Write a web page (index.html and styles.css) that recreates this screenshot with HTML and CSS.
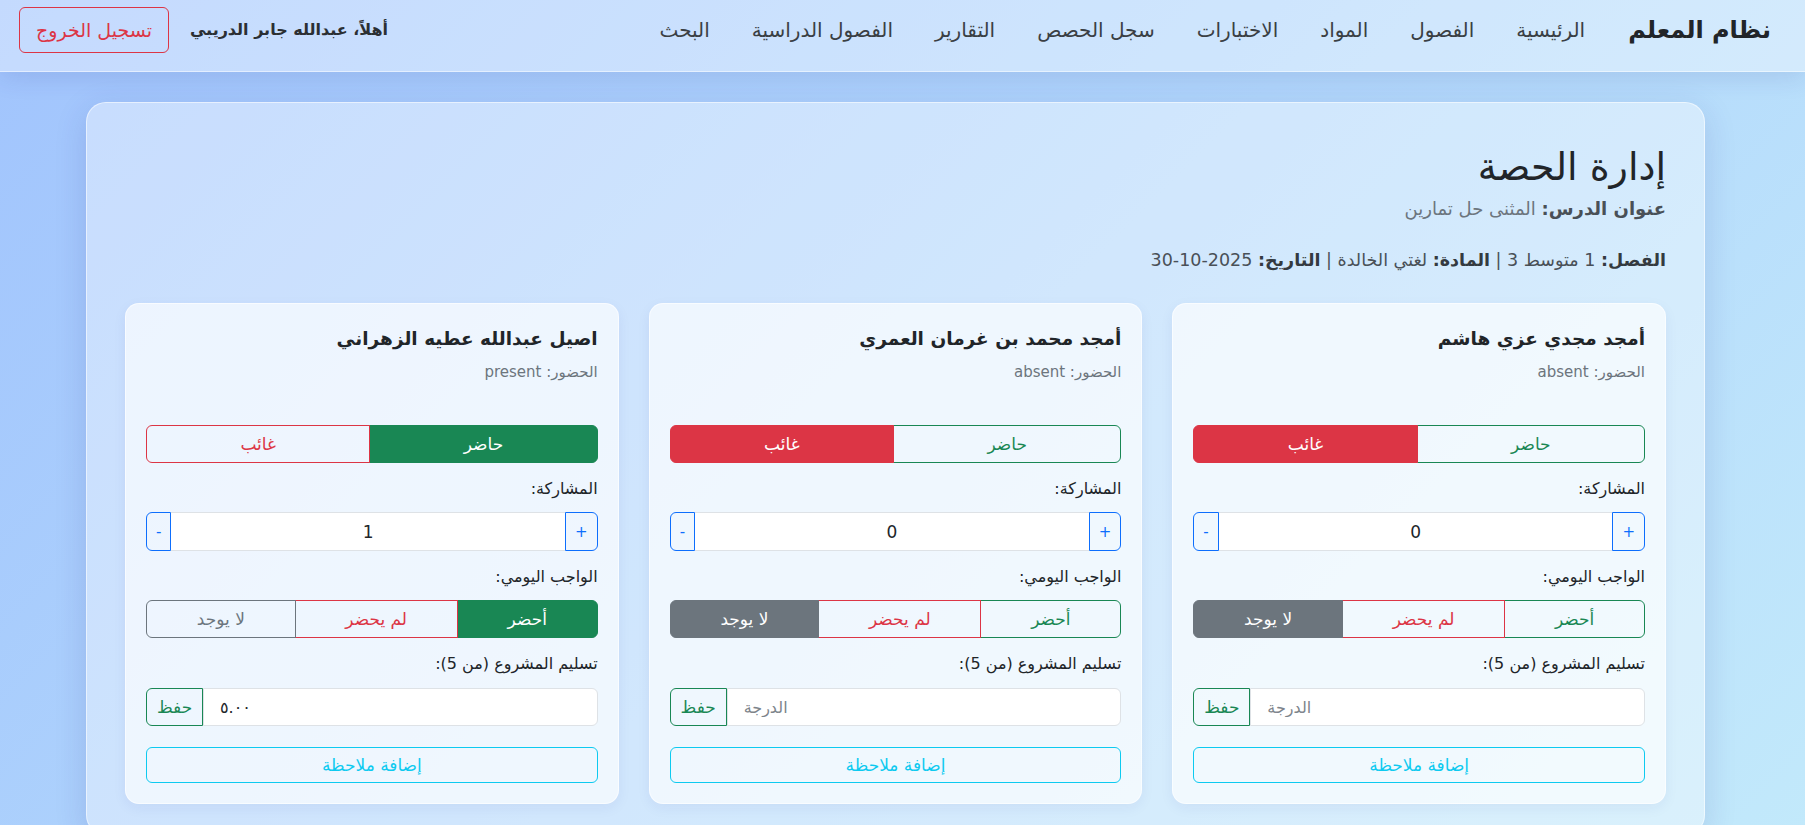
FILE: index.html
```html
<!DOCTYPE html>
<html lang="ar" dir="rtl">
<head>
<meta charset="utf-8">
<title>إدارة الحصة</title>
<link rel="stylesheet" href="styles.css">
</head>
<body>
<nav class="navbar">
  <a class="brand" href="#">نظام المعلم</a>
  <ul class="nav-links">
    <li><a href="#">الرئيسية</a></li>
    <li><a href="#">الفصول</a></li>
    <li><a href="#">المواد</a></li>
    <li><a href="#">الاختبارات</a></li>
    <li><a href="#">سجل الحصص</a></li>
    <li><a href="#">التقارير</a></li>
    <li><a href="#">الفصول الدراسية</a></li>
    <li><a href="#">البحث</a></li>
  </ul>
  <div class="user-area">
    <span class="user-name">أهلاً، عبدالله جابر الدريبي</span>
    <button class="btn-logout">تسجيل الخروج</button>
  </div>
</nav>

<main class="panel">
  <h1 class="page-title">إدارة الحصة</h1>
  <p class="lesson"><strong>عنوان الدرس:</strong> المثنى حل تمارين</p>
  <p class="details"><strong>الفصل:</strong> 1 متوسط 3 | <strong>المادة:</strong> لغتي الخالدة | <strong>التاريخ:</strong> 2025-10-30</p>

  <div class="cards">
    <section class="card">
      <h2 class="student">أمجد مجدي عزي هاشم</h2>
      <p class="attend">الحضور: absent</p>
      <div class="group">
        <button class="btn out-success">حاضر</button>
        <button class="btn fill-danger">غائب</button>
      </div>
      <label class="field-label">المشاركة:</label>
      <div class="stepper">
        <button class="step">+</button>
        <input class="step-input" type="text" value="0">
        <button class="step">-</button>
      </div>
      <label class="field-label">الواجب اليومي:</label>
      <div class="group">
        <button class="btn out-success">أحضر</button>
        <button class="btn out-danger">لم يحضر</button>
        <button class="btn fill-secondary">لا يوجد</button>
      </div>
      <label class="field-label">تسليم المشروع (من 5):</label>
      <div class="project">
        <input class="grade" type="text" placeholder="الدرجة">
        <button class="save">حفظ</button>
      </div>
      <button class="note">إضافة ملاحظة</button>
    </section>

    <section class="card">
      <h2 class="student">أمجد محمد بن غرمان العمري</h2>
      <p class="attend">الحضور: absent</p>
      <div class="group">
        <button class="btn out-success">حاضر</button>
        <button class="btn fill-danger">غائب</button>
      </div>
      <label class="field-label">المشاركة:</label>
      <div class="stepper">
        <button class="step">+</button>
        <input class="step-input" type="text" value="0">
        <button class="step">-</button>
      </div>
      <label class="field-label">الواجب اليومي:</label>
      <div class="group">
        <button class="btn out-success">أحضر</button>
        <button class="btn out-danger">لم يحضر</button>
        <button class="btn fill-secondary">لا يوجد</button>
      </div>
      <label class="field-label">تسليم المشروع (من 5):</label>
      <div class="project">
        <input class="grade" type="text" placeholder="الدرجة">
        <button class="save">حفظ</button>
      </div>
      <button class="note">إضافة ملاحظة</button>
    </section>

    <section class="card">
      <h2 class="student">اصيل عبدالله عطيه الزهراني</h2>
      <p class="attend">الحضور: present</p>
      <div class="group">
        <button class="btn fill-success">حاضر</button>
        <button class="btn out-danger">غائب</button>
      </div>
      <label class="field-label">المشاركة:</label>
      <div class="stepper">
        <button class="step">+</button>
        <input class="step-input" type="text" value="1">
        <button class="step">-</button>
      </div>
      <label class="field-label">الواجب اليومي:</label>
      <div class="group">
        <button class="btn fill-success">أحضر</button>
        <button class="btn out-danger">لم يحضر</button>
        <button class="btn out-secondary">لا يوجد</button>
      </div>
      <label class="field-label">تسليم المشروع (من 5):</label>
      <div class="project">
        <input class="grade" type="text" placeholder="الدرجة" value="٥.٠٠">
        <button class="save">حفظ</button>
      </div>
      <button class="note">إضافة ملاحظة</button>
    </section>
  </div>
</main>
</body>
</html>
```
FILE: styles.css
```css
* { box-sizing: border-box; }
html, body { margin: 0; padding: 0; }
body {
  font-family: "DejaVu Sans", "Noto Sans", sans-serif;
  font-size: 16px;
  color: #212529;
  background: linear-gradient(135deg, #a1c4fd 0%, #c2e9fb 100%);
  min-height: 100vh;
}
button, input { font-family: inherit; }

.navbar {
  height: 72px;
  display: flex;
  align-items: center;
  padding: 0 34px 12px 19px;
  background: rgba(255, 255, 255, 0.38);
  border-bottom: 1px solid rgba(255, 255, 255, 0.5);
  box-shadow: 0 6px 24px rgba(31, 38, 135, 0.12);
}
.brand {
  font-size: 24px;
  font-weight: bold;
  color: #212529;
  text-decoration: none;
  margin-left: 22px;
}
.nav-links {
  display: flex;
  list-style: none;
  margin: 0;
  padding: 0;
}
.nav-links a {
  display: block;
  padding: 0 21px;
  font-size: 20px;
  color: #3a3f44;
  text-decoration: none;
}
.user-area {
  margin-right: auto;
  display: flex;
  align-items: center;
  gap: 21px;
}
.user-name {
  font-weight: bold;
  font-size: 16px;
  color: #2b2f33;
}
.btn-logout {
  height: 46px;
  padding: 0 16px;
  font-size: 19px;
  color: #dc3545;
  background: transparent;
  border: 1px solid #dc3545;
  border-radius: 6px;
}

.panel {
  margin: 30px 100px 0 86px;
  padding: 40px 38px 30px;
  background: rgba(255, 255, 255, 0.4);
  border: 1px solid rgba(255, 255, 255, 0.55);
  border-radius: 20px;
  box-shadow: 0 8px 32px rgba(31, 38, 135, 0.15);
}
.page-title {
  margin: 0 0 4px;
  font-size: 38px;
  font-weight: normal;
  line-height: 48px;
  color: #212529;
}
.lesson {
  margin: 0 0 25px;
  font-size: 18px;
  line-height: 27px;
  color: #6c757d;
}
.lesson strong { color: #495057; }
.details {
  margin: 0 0 29px;
  font-size: 17.5px;
  line-height: 27px;
  color: #495057;
}
.details strong { color: #343a40; }

.cards {
  display: grid;
  grid-template-columns: repeat(3, 1fr);
  gap: 30px;
}
.card {
  display: flex;
  flex-direction: column;
  padding: 22px 20px 20px;
  background: rgba(255, 255, 255, 0.66);
  border: 1px solid rgba(255, 255, 255, 0.6);
  border-radius: 14px;
  box-shadow: 0 4px 14px rgba(31, 38, 135, 0.06);
}
.student {
  margin: 0 0 9px;
  font-size: 18.5px;
  line-height: 26px;
  font-weight: bold;
  color: #212529;
}
.attend {
  margin: 0 0 42px;
  font-size: 15px;
  line-height: 22px;
  color: #6c757d;
}
.group {
  display: flex;
  height: 38px;
}
.btn {
  flex: 1 1 auto;
  font-size: 17px;
  padding: 0 12px;
  background: transparent;
  border: 1px solid;
  border-radius: 0;
}
.btn + .btn { margin-right: -1px; }
.btn:first-child { border-radius: 0 6px 6px 0; }
.btn:last-child { border-radius: 6px 0 0 6px; }
.out-success { color: #198754; border-color: #198754; }
.fill-success { color: #fff; background: #198754; border-color: #198754; }
.out-danger { color: #dc3545; border-color: #dc3545; }
.fill-danger { color: #fff; background: #dc3545; border-color: #dc3545; }
.out-secondary { color: #6c757d; border-color: #6c757d; }
.fill-secondary { color: #fff; background: #6c757d; border-color: #6c757d; }

.field-label {
  display: block;
  margin: 15px 0 12px;
  font-size: 16px;
  line-height: 22px;
  color: #212529;
}
.stepper {
  display: flex;
  height: 39px;
}
.step {
  padding: 0 9px;
  font-size: 15px;
  color: #0d6efd;
  background: transparent;
  border: 1px solid #0d6efd;
}
.step:first-child { border-radius: 0 6px 6px 0; }
.step:last-child { border-radius: 6px 0 0 6px; }
.step-input {
  flex: 1;
  min-width: 0;
  text-align: center;
  font-size: 17px;
  color: #212529;
  background: #fff;
  border: 1px solid #dee2e6;
  border-left: 0;
  border-right: 0;
  outline: none;
}
.project {
  display: flex;
  height: 38px;
  margin-top: 1px;
}
.grade {
  flex: 1;
  min-width: 0;
  direction: ltr;
  text-align: left;
  padding: 0 16px;
  font-size: 16px;
  color: #212529;
  background: #fff;
  border: 1px solid #dee2e6;
  border-radius: 0 6px 6px 0;
  outline: none;
}
.grade::placeholder { color: #7d848b; }
.save {
  width: 57px;
  font-size: 17px;
  color: #198754;
  background: transparent;
  border: 1px solid #198754;
  border-radius: 6px 0 0 6px;
}
.note {
  margin-top: 21px;
  height: 36px;
  font-size: 17px;
  color: #0dcaf0;
  background: transparent;
  border: 1px solid #0dcaf0;
  border-radius: 6px;
}
```
